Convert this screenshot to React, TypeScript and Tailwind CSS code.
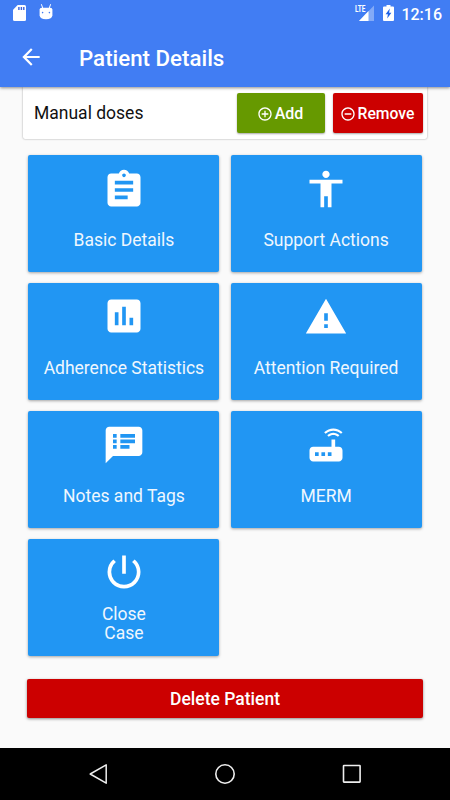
import type { ReactNode } from "react";
import type { IconType } from "react-icons";
import {
  MdAccessibility,
  MdAddCircleOutline,
  MdArrowBack,
  MdAssessment,
  MdAssignment,
  MdPowerSettingsNew,
  MdRemoveCircleOutline,
  MdRouter,
  MdSpeakerNotes,
  MdWarning,
} from "react-icons/md";

type Tile = {
  id: string;
  label: ReactNode;
  icon: IconType;
  iconClass: string;
};

const tiles: Tile[] = [
  { id: "basic", label: "Basic Details", icon: MdAssignment, iconClass: "mt-[13px]" },
  { id: "support", label: "Support Actions", icon: MdAccessibility, iconClass: "mt-[12px]" },
  { id: "adherence", label: "Adherence Statistics", icon: MdAssessment, iconClass: "mt-[11px]" },
  { id: "attention", label: "Attention Required", icon: MdWarning, iconClass: "mt-[12px]" },
  { id: "notes", label: "Notes and Tags", icon: MdSpeakerNotes, iconClass: "mt-[11.5px]" },
  { id: "merm", label: "MERM", icon: MdRouter, iconClass: "mt-[11.5px]" },
  {
    id: "close",
    label: (
      <>
        Close
        <br />
        Case
      </>
    ),
    icon: MdPowerSettingsNew,
    iconClass: "mt-[11px]",
  },
];

function SdCardIcon() {
  return (
    <svg width="13" height="16" viewBox="0 0 13 16" fill="white">
      <path d="M4.700 0H11.500Q13 0 13 1.500v13q0 1.500-1.500 1.500h-10Q0 16 0 14.500V4.700z" />
      <path d="M5.200 2h1.400v3H5.200zM7.700 2h1.400v3H7.700zM10.100 2h1.400v3h-1.400z" fill="#3a62dc" />
    </svg>
  );
}

function DebugHeadIcon() {
  return (
    <svg width="14" height="16" viewBox="0 0 14 16" fill="white">
      <path d="M2.500.600l1.300 3.600M11.500.600l-1.300 3.600" stroke="white" strokeWidth="1" strokeLinecap="round" />
      <path d="M.600 5.500Q.800 3.800 2.600 3.800h8.800q1.800 0 2 1.700v5.800Q13 15.200 7 15.200T.600 11.300z" />
      <circle cx="3.600" cy="8.600" r=".8" fill="#417df3" />
      <circle cx="10.400" cy="8.600" r=".8" fill="#417df3" />
    </svg>
  );
}

function SignalIcon() {
  return (
    <svg width="19" height="16" viewBox="0 0 19 16">
      <path d="M19 .500V16H4z" fill="white" fillOpacity=".35" />
      <path d="M13.500 6v10H4z" fill="white" />
      <path d="M0 0h11.500v7.500H0z" fill="#417df3" />
      <text x="0" y="7" fontSize="9" fontWeight="700" textLength="10.500" lengthAdjust="spacingAndGlyphs" fill="white">
        LTE
      </text>
    </svg>
  );
}

function BatteryIcon() {
  return (
    <svg width="11" height="16" viewBox="0 0 11 16" fill="white">
      <path d="M3.500 0h4v1.500H10q1 0 1 1V15q0 1-1 1H1q-1 0-1-1V2.500q0-1 1-1h2.500z" />
      <path d="M6.800 3.500L2.600 9.300h2.300l-.7 4.200 4.200-5.800H6.100z" fill="#1f63e6" />
    </svg>
  );
}

function StatusBar() {
  return (
    <div className="flex h-[27px] items-center pl-[13px] pr-[8px] pb-px">
      <SdCardIcon />
      <div className="ml-[13px] mb-[2px]">
        <DebugHeadIcon />
      </div>
      <div className="ml-auto flex items-center">
        <SignalIcon />
        <div className="ml-[9px]">
          <BatteryIcon />
        </div>
        <span className="ml-[7px] pt-[3px] text-[16px] leading-none font-medium">12:16</span>
      </div>
    </div>
  );
}

function DetailTile({ label, icon: Icon, iconClass }: Tile) {
  return (
    <button
      type="button"
      className="flex h-[117px] flex-col items-center rounded-[2px] bg-[#2196f3] text-[#eff7fe] shadow-[0_1px_3px_rgba(0,0,0,0.35)]"
    >
      <span className="flex h-[61px] shrink-0 items-start">
        <Icon className={`size-[44px] shrink-0 text-white ${iconClass}`} />
      </span>
      <span className="flex h-[48px] items-center text-center text-[17.500px] leading-[19px]">
        <span>{label}</span>
      </span>
    </button>
  );
}

export default function App() {
  return (
    <div className="flex h-[800px] w-[450px] flex-col overflow-hidden bg-[#fafafa] font-['Roboto',sans-serif]">
      <header className="z-10 h-[87px] shrink-0 bg-[#417df3] text-white shadow-[0_1px_3px_rgba(0,0,0,0.45)]">
        <StatusBar />
        <div className="flex h-[60px] items-center pl-[18px]">
          <MdArrowBack className="size-[26px]" />
          <h1 className="ml-[35px] pt-[3px] text-[22.3px] leading-none font-medium">Patient Details</h1>
        </div>
      </header>

      <main className="flex flex-1 flex-col">
        <section className="mx-[23px] flex h-[52px] items-center rounded-b-[2px] bg-white pl-[11px] pr-[4px] shadow-[0_0_2px_rgba(0,0,0,0.4)]">
          <span className="text-[17.5px] text-[#111]">Manual doses</span>
          <button
            type="button"
            className="ml-auto flex h-[40px] w-[88px] items-center justify-center gap-[2px] rounded-[2px] bg-[#669900] pt-[2px] pr-[2px] text-[16px] font-medium text-white shadow-[0_1px_2px_rgba(0,0,0,0.35)]"
          >
            <MdAddCircleOutline className="size-[16px]" />
            Add
          </button>
          <button
            type="button"
            className="ml-[8px] flex h-[40px] w-[90px] items-center justify-center gap-[2px] rounded-[2px] bg-[#cc0000] pt-[2px] pr-[2px] text-[15.7px] font-medium text-white shadow-[0_1px_2px_rgba(0,0,0,0.35)]"
          >
            <MdRemoveCircleOutline className="size-[16px]" />
            Remove
          </button>
        </section>

        <section className="ml-[28.4px] mt-[16px] grid grid-cols-[191px_191px] gap-x-[11.2px] gap-y-[11px]">
          {tiles.map((tile) => (
            <DetailTile key={tile.id} {...tile} />
          ))}
        </section>

        <button
          type="button"
          className="mx-[27px] mt-[23px] h-[39px] rounded-[2px] bg-[#cc0000] pt-[1px] text-[17.5px] font-medium text-white shadow-[0_1px_3px_rgba(0,0,0,0.45)]"
        >
          Delete Patient
        </button>
      </main>

      <nav className="flex h-[52px] shrink-0 items-center bg-black text-[#eee]">
        <svg className="ml-[88px]" width="20" height="22" viewBox="0 0 20 22" fill="none" stroke="currentColor" strokeWidth="1.500">
          <path d="M18.200 1.800v18.400L2.200 11z" strokeLinejoin="round" />
        </svg>
        <svg className="ml-[106px]" width="22" height="22" viewBox="0 0 22 22" fill="none" stroke="currentColor" strokeWidth="1.600">
          <circle cx="11" cy="11" r="9.200" />
        </svg>
        <svg className="ml-[106px]" width="20" height="20" viewBox="0 0 20 20" fill="none" stroke="currentColor" strokeWidth="1.600">
          <rect x="1.500" y="1.500" width="16.600" height="16.600" rx=".5" />
        </svg>
      </nav>
    </div>
  );
}
